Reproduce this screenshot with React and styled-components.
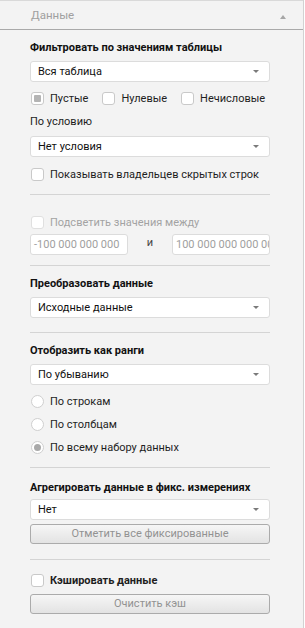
import React from 'react';
import styled, { createGlobalStyle } from 'styled-components';

// -- Component
const GlobalStyle = createGlobalStyle`
  html, body {
    margin: 0;
    padding: 0;
    background: #ffffff;
  }

  body {
    font-family: Roboto, 'Noto Sans', sans-serif;
    font-size: 11px;
    color: #1e1e1e;
  }
`;

function Select({ value, mt }) {
  return (
    <SelectBox $mt={mt}>
      <span>{value}</span>
      <Caret />
    </SelectBox>
  );
}

function Check({ label, checked, disabled, bold, mt }) {
  return (
    <CheckRow $mt={mt} $disabled={disabled} $bold={bold}>
      <CheckBox $checked={checked} $disabled={disabled} />
      <span>{label}</span>
    </CheckRow>
  );
}

function Radio({ label, checked, mt }) {
  return (
    <CheckRow $mt={mt}>
      <RadioDot $checked={checked} />
      <span>{label}</span>
    </CheckRow>
  );
}

export default function App() {
  return (
    <>
      <GlobalStyle />
      <Panel>
        <Header>
          <HeaderTitle>Данные</HeaderTitle>
          <CollapseCaret />
        </Header>

        <Content>
          <Title $mt={10}>Фильтровать по значениям таблицы</Title>
          <Select value="Вся таблица" mt={5} />
          <CheckGroup>
            <Check label="Пустые" checked />
            <Check label="Нулевые" />
            <Check label="Нечисловые" />
          </CheckGroup>
          <Label $mt={8}>По условию</Label>
          <Select value="Нет условия" mt={6} />
          <Check label="Показывать владельцев скрытых строк" mt={9} />

          <Divider $mt={12} />

          <Check label="Подсветить значения между" disabled mt={19} />
          <RangeRow>
            <RangeInput>-100 000 000 000</RangeInput>
            <RangeAnd>и</RangeAnd>
            <RangeInput>100 000 000 000 000</RangeInput>
          </RangeRow>

          <Divider $mt={10} />

          <Title $mt={10}>Преобразовать данные</Title>
          <Select value="Исходные данные" mt={5} />

          <Divider $mt={14} />

          <Title $mt={10}>Отобразить как ранги</Title>
          <Select value="По убыванию" mt={5} />
          <Radio label="По строкам" mt={8} />
          <Radio label="По столбцам" mt={7} />
          <Radio label="По всему набору данных" checked mt={7} />

          <Divider $mt={12} />

          <Title $mt={12}>Агрегировать данные в фикс. измерениях</Title>
          <Select value="Нет" mt={3} />
          <Button $mt={4}>Отметить все фиксированные</Button>

          <Divider $mt={15} />

          <Check label="Кэшировать данные" bold mt={12} />
          <Button $mt={6}>Очистить кэш</Button>
        </Content>
      </Panel>
    </>
  );
}

// -- Styles
const Panel = styled.div`
  width: 304px;
  height: 628px;
  box-sizing: border-box;
  background: #f3f3f3;
  border-right: 1px solid #d2d2d2;
`;

const Header = styled.div`
  display: flex;
  align-items: center;
  justify-content: space-between;
  height: 28px;
  padding: 0 17px 0 31px;
  border-top: 1px solid #d9d9d9;
  border-bottom: 1px solid #a9a9a9;
`;

const HeaderTitle = styled.span`
  color: #a0a0a0;
  font-size: 11.5px;
`;

const CollapseCaret = styled.span`
  width: 0;
  height: 0;
  margin-top: 3px;
  border-left: 3px solid transparent;
  border-right: 3px solid transparent;
  border-bottom: 4px solid #a6a6a6;
`;

const Content = styled.div`
  display: flex;
  flex-direction: column;
  width: 240px;
  margin-left: 30px;
`;

const Title = styled.div`
  margin-top: ${({ $mt }) => $mt || 0}px;
  line-height: 16px;
  font-weight: 700;
  color: #111;
  white-space: nowrap;
`;

const Label = styled.div`
  margin-top: ${({ $mt }) => $mt || 0}px;
  line-height: 16px;
  color: #1e1e1e;
`;

const SelectBox = styled.div`
  display: flex;
  align-items: center;
  justify-content: space-between;
  height: 21px;
  margin-top: ${({ $mt }) => $mt || 0}px;
  padding: 0 10px 0 7px;
  box-sizing: border-box;
  background: #ffffff;
  border: 1px solid #dcdcdc;
  border-radius: 3px;
  color: #111;
`;

const Caret = styled.span`
  width: 0;
  height: 0;
  border-left: 3px solid transparent;
  border-right: 3px solid transparent;
  border-top: 3px solid #7a7a7a;
`;

const CheckGroup = styled.div`
  display: flex;
  gap: 13px;
  margin-top: 8px;
`;

const CheckRow = styled.div`
  display: flex;
  align-items: center;
  gap: 6px;
  height: 16px;
  margin-top: ${({ $mt }) => $mt || 0}px;
  color: ${({ $disabled }) => ($disabled ? '#a3a3a3' : '#1e1e1e')};
  font-weight: ${({ $bold }) => ($bold ? 700 : 400)};
  white-space: nowrap;
`;

const CheckBox = styled.span`
  position: relative;
  flex: none;
  width: 13px;
  height: 13px;
  box-sizing: border-box;
  margin-left: 1px;
  background: #ffffff;
  border: 1px solid ${({ $disabled }) => ($disabled ? '#e0e0e0' : '#c9c9c9')};
  border-radius: 3px;

  &::after {
    content: '';
    display: ${({ $checked }) => ($checked ? 'block' : 'none')};
    position: absolute;
    inset: 2px;
    border-radius: 1px;
    background: #b4b4b4;
  }
`;

const RadioDot = styled.span`
  position: relative;
  flex: none;
  width: 13px;
  height: 13px;
  box-sizing: border-box;
  margin-left: 1px;
  background: #ffffff;
  border: 1px solid #cfcfcf;
  border-radius: 50%;

  &::after {
    content: '';
    display: ${({ $checked }) => ($checked ? 'block' : 'none')};
    position: absolute;
    inset: 2px;
    border-radius: 50%;
    background: #a9a9a9;
  }
`;

const RangeRow = styled.div`
  display: flex;
  align-items: center;
  margin-top: 4px;
`;

const RangeInput = styled.div`
  width: 98px;
  height: 21px;
  box-sizing: border-box;
  padding: 0 3px;
  overflow: hidden;
  background: #ffffff;
  border: 1px solid #dcdcdc;
  border-radius: 3px;
  color: #a0a0a0;
  line-height: 19px;
  white-space: nowrap;
`;

const RangeAnd = styled.span`
  flex: 1;
  text-align: center;
  margin-top: -5px;
  color: #444;
`;

const Divider = styled.div`
  height: 1px;
  margin-top: ${({ $mt }) => $mt || 0}px;
  background: #d4d4d4;
`;

const Button = styled.div`
  height: 20px;
  margin-top: ${({ $mt }) => $mt || 0}px;
  box-sizing: border-box;
  background: linear-gradient(#f6f6f6, #e3e3e3);
  border: 1px solid #ababab;
  border-radius: 3px;
  color: #929292;
  line-height: 18px;
  text-align: center;
`;
